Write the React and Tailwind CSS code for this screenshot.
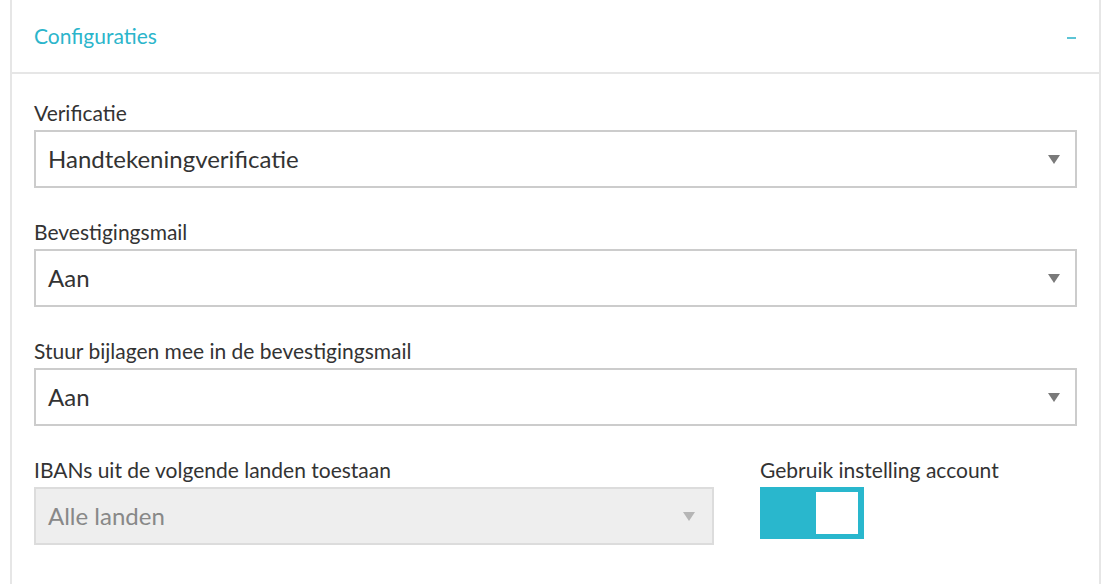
const SelectArrow = ({ disabled }) => (
  <svg
    width="12"
    height="9"
    viewBox="0 0 12 9"
    className="shrink-0"
    aria-hidden="true"
  >
    <path d="M0 0 L12 0 L6 9 Z" fill={disabled ? "#b5b5b5" : "#7a7a7a"} />
  </svg>
);

const Field = ({ label, value, disabled, className = "" }) => (
  <div className={className}>
    <label className="block text-[21px] leading-[24px] text-[#333] mb-[5px]">
      {label}
    </label>
    <div
      className={
        disabled
          ? "h-[58px] flex items-center justify-between pl-3 pr-[17px] border-2 border-[#dcdcdc] bg-[#eeeeee] text-[#888] cursor-not-allowed"
          : "h-[58px] flex items-center justify-between pl-3 pr-[15px] border-2 border-[#cccccc] bg-white text-[#333] cursor-pointer"
      }
    >
      <span className="text-[24px] leading-none">{value}</span>
      <SelectArrow disabled={disabled} />
    </div>
  </div>
);

const App = () => {
  return (
    <div className="min-h-screen bg-white font-['Lato','Noto_Sans',sans-serif]">
      <div className="ml-[10px] w-[1091px] min-h-screen border-x-2 border-[#e6e6e6]">
        <div className="h-[74px] flex items-center justify-between px-[22px] border-b-2 border-[#e6e6e6]">
          <h2 className="text-[21px] leading-none text-[#2bb5cb] pb-[2px]">
            Configuraties
          </h2>
          <span className="block w-[9px] h-[2px] bg-[#5cc4d5] mr-[1px] mt-[3px]"></span>
        </div>

        <div className="px-[22px] pt-[27px]">
          <Field
            label="Verificatie"
            value="Handtekeningverificatie"
            className="mb-[32px]"
          />
          <Field label="Bevestigingsmail" value="Aan" className="mb-[32px]" />
          <Field
            label="Stuur bijlagen mee in de bevestigingsmail"
            value="Aan"
            className="mb-[32px]"
          />

          <div className="flex">
            <Field
              label="IBANs uit de volgende landen toestaan"
              value="Alle landen"
              disabled
              className="w-[680px]"
            />
            <div className="ml-[46px]">
              <label className="block text-[21px] leading-[24px] text-[#333] mb-[5px]">
                Gebruik instelling account
              </label>
              <button
                type="button"
                className="w-[104px] h-[52px] bg-[#29b7cd] flex items-center justify-end pr-[6px]"
              >
                <span className="block w-[42px] h-[42px] bg-white"></span>
              </button>
            </div>
          </div>
        </div>
      </div>
    </div>
  );
};

export default App;
